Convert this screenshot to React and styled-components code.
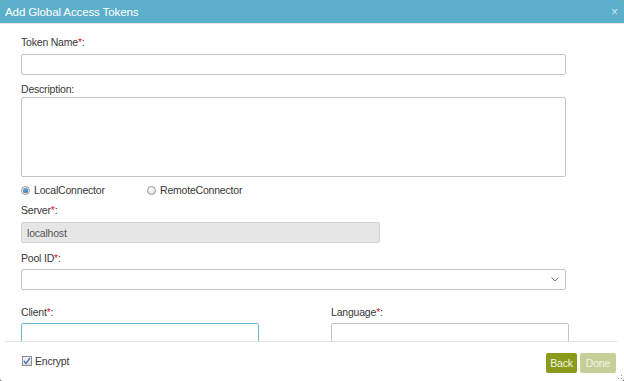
import styled, { createGlobalStyle } from 'styled-components';

const GlobalStyle = createGlobalStyle`
  html, body {
    margin: 0;
    padding: 0;
    background: #6f6f6f;
  }
  body {
    font-family: "Liberation Sans", Arial, sans-serif;
  }
`;

// dialog frame
const Dialog = styled.div`
  width: 624px;
  height: 381px;
  background: #fff;
  border-radius: 3px;
  display: flex;
  flex-direction: column;
  overflow: hidden;
  position: relative;
`;
const TitleBar = styled.div`
  height: 23px;
  flex: none;
  background: #5bafcb;
  border-bottom: 1px solid #e4e4e4;
  display: flex;
  align-items: center;
  justify-content: space-between;
  padding: 0 6px 0 5px;
`;
const Title = styled.span`
  color: #fff;
  font-size: 11.6px;
  letter-spacing: -0.15px;
  line-height: 14px;
`;
const Close = styled.span`
  color: #cfe8f1;
  font-size: 12px;
  line-height: 12px;
  cursor: pointer;
`;

// form body
const Body = styled.div`
  flex: 1;
  overflow: hidden;
  padding: 12px 0 0 21px;
`;
const Field = styled.div`
  margin-top: ${(p) => p.$top || 0}px;
`;
const Label = styled.div`
  font-size: 10.5px;
  letter-spacing: -0.2px;
  line-height: 13px;
  color: #383838;
  margin-bottom: ${(p) => (p.$gap === undefined ? 5 : p.$gap)}px;
`;
const Star = styled.span`
  color: #e0202a;
`;
const Input = styled.div`
  box-sizing: border-box;
  width: ${(p) => p.$w}px;
  height: ${(p) => p.$h || 21}px;
  border: 1px solid ${(p) => (p.$focus ? '#72b7d2' : p.$disabled ? '#d2d2d2' : '#c4c4c4')};
  background: ${(p) => (p.$disabled ? '#e6e6e6' : '#fff')};
  border-radius: 2px;
  font-size: 10.5px;
  letter-spacing: -0.2px;
  color: #555;
  display: flex;
  align-items: ${(p) => (p.$multi ? 'flex-start' : 'center')};
  justify-content: space-between;
  padding: 0 6px 0 5px;
`;
const Chevron = styled.svg`
  width: 8px;
  height: 5px;
`;
const RadioRow = styled.div`
  display: flex;
  margin-top: 6px;
  height: 14px;
  align-items: center;
`;
const RadioOption = styled.label`
  display: flex;
  align-items: center;
  width: ${(p) => p.$w}px;
  font-size: 10.5px;
  letter-spacing: -0.2px;
  color: #383838;
`;
const RadioDot = styled.span`
  box-sizing: border-box;
  width: 9px;
  height: 9px;
  border-radius: 50%;
  border: 1px solid #9a9a9a;
  background: radial-gradient(circle at 40% 35%, #fff, #d6d6d6);
  margin-right: 4px;
  display: flex;
  align-items: center;
  justify-content: center;
  &::after {
    content: '';
    display: ${(p) => (p.$checked ? 'block' : 'none')};
    width: 5px;
    height: 5px;
    border-radius: 50%;
    background: radial-gradient(circle at 40% 35%, #6fb0e6, #1f5d96);
  }
`;
const TwoCols = styled.div`
  display: grid;
  grid-template-columns: 238px 238px;
  column-gap: 72px;
  margin-top: 16px;
`;

// footer
const Footer = styled.div`
  height: 37px;
  flex: none;
  margin: 0 7px 0 5px;
  border-top: 1px solid #e2e2e2;
  display: flex;
  align-items: center;
  justify-content: space-between;
  padding: 2px 1px 0 17px;
`;
const Check = styled.label`
  display: flex;
  align-items: center;
  font-size: 10.5px;
  letter-spacing: -0.2px;
  color: #383838;
  gap: 3px;
  margin-top: -4px;
`;
const CheckBox = styled.span`
  box-sizing: border-box;
  width: 10px;
  height: 10px;
  border: 1px solid #8f8f8f;
  background: linear-gradient(#f4f4f4, #dcdcdc);
  display: flex;
  align-items: center;
  justify-content: center;
`;
const Buttons = styled.div`
  display: flex;
  gap: 3px;
`;
const Button = styled.button`
  height: 20px;
  width: ${(p) => p.$w}px;
  border: none;
  border-radius: 2px;
  padding: 0;
  font-family: inherit;
  font-size: 10.5px;
  letter-spacing: -0.2px;
  color: ${(p) => (p.$muted ? '#f1f3e4' : '#f4f6e6')};
  background: ${(p) => (p.$muted ? '#c6cf98' : '#8a9a1b')};
`;
const Grip = styled.svg`
  position: absolute;
  right: 2px;
  bottom: 2px;
  width: 4px;
  height: 4px;
`;

function Req({ children }) {
  return (
    <>
      {children}
      <Star>*</Star>:
    </>
  );
}

export default function App() {
  return (
    <>
      <GlobalStyle />
      <Dialog>
        <TitleBar>
          <Title>Add Global Access Tokens</Title>
          <Close>×</Close>
        </TitleBar>
        <Body>
          <Field>
            <Label>
              <Req>Token Name</Req>
            </Label>
            <Input $w={545} />
          </Field>
          <Field $top={8}>
            <Label $gap={1}>Description:</Label>
            <Input $w={545} $h={80} $multi />
          </Field>
          <RadioRow>
            <RadioOption $w={126}>
              <RadioDot $checked />
              LocalConnector
            </RadioOption>
            <RadioOption $w={120}>
              <RadioDot />
              RemoteConnector
            </RadioOption>
          </RadioRow>
          <Field $top={7}>
            <Label $gap={5}>
              <Req>Server</Req>
            </Label>
            <Input $w={359} $disabled>
              localhost
            </Input>
          </Field>
          <Field $top={9}>
            <Label $gap={4}>
              <Req>Pool ID</Req>
            </Label>
            <Input $w={545}>
              <span />
              <Chevron viewBox="0 0 8 5">
                <path d="M0.5 0.5 L4 4 L7.5 0.5" fill="none" stroke="#777" strokeWidth="1" />
              </Chevron>
            </Input>
          </Field>
          <TwoCols>
            <Field>
              <Label $gap={4}>
                <Req>Client</Req>
              </Label>
              <Input $w={238} $focus />
            </Field>
            <Field>
              <Label $gap={4}>
                <Req>Language</Req>
              </Label>
              <Input $w={238} />
            </Field>
          </TwoCols>
        </Body>
        <Footer>
          <Check>
            <CheckBox>
              <svg width="8" height="8" viewBox="0 0 8 8">
                <path d="M1 4 L3 6.5 L7 0.8" fill="none" stroke="#3a6fb5" strokeWidth="1.3" />
              </svg>
            </CheckBox>
            Encrypt
          </Check>
          <Buttons>
            <Button $w={31}>Back</Button>
            <Button $w={36} $muted>
              Done
            </Button>
          </Buttons>
        </Footer>
        <Grip viewBox="0 0 4 4">
          <rect x="3" y="0" width="1" height="1" fill="#999" />
          <rect x="0" y="3" width="1" height="1" fill="#999" />
          <rect x="3" y="3" width="1" height="1" fill="#999" />
        </Grip>
      </Dialog>
    </>
  );
}
